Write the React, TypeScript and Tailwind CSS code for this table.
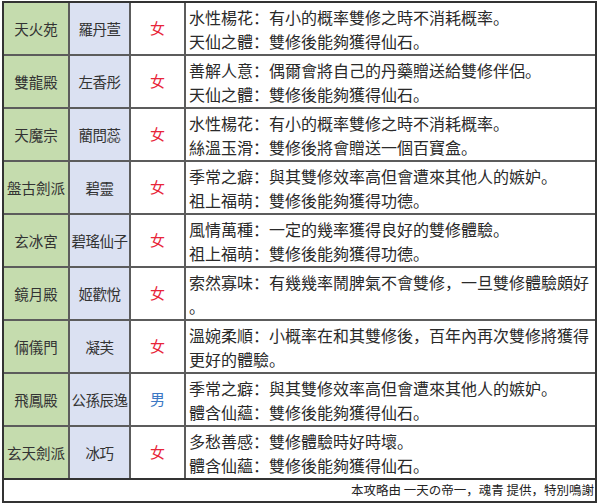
import React from "react";

interface Row {
  sect: string;
  name: string;
  gender: "女" | "男";
  lines: string[];
}

const rows: Row[] = [
  {
    sect: "天火苑",
    name: "羅丹萱",
    gender: "女",
    lines: ["水性楊花：有小的概率雙修之時不消耗概率。", "天仙之體：雙修後能夠獲得仙石。"],
  },
  {
    sect: "雙龍殿",
    name: "左香彤",
    gender: "女",
    lines: ["善解人意：偶爾會將自己的丹藥贈送給雙修伴侶。", "天仙之體：雙修後能夠獲得仙石。"],
  },
  {
    sect: "天魔宗",
    name: "藺問蕊",
    gender: "女",
    lines: ["水性楊花：有小的概率雙修之時不消耗概率。", "絲溫玉滑：雙修後將會贈送一個百寶盒。"],
  },
  {
    sect: "盤古劍派",
    name: "碧靈",
    gender: "女",
    lines: ["季常之癖：與其雙修效率高但會遭來其他人的嫉妒。", "祖上福萌：雙修後能夠獲得功德。"],
  },
  {
    sect: "玄冰宮",
    name: "碧瑤仙子",
    gender: "女",
    lines: ["風情萬種：一定的幾率獲得良好的雙修體驗。", "祖上福萌：雙修後能夠獲得功德。"],
  },
  {
    sect: "鏡月殿",
    name: "姬歡悅",
    gender: "女",
    lines: ["索然寡味：有幾幾率鬧脾氣不會雙修，一旦雙修體驗頗好", "。"],
  },
  {
    sect: "倆儀門",
    name: "凝芙",
    gender: "女",
    lines: ["溫婉柔順：小概率在和其雙修後，百年內再次雙修將獲得", "更好的體驗。"],
  },
  {
    sect: "飛鳳殿",
    name: "公孫辰逸",
    gender: "男",
    lines: ["季常之癖：與其雙修效率高但會遭來其他人的嫉妒。", "體含仙蘊：雙修後能夠獲得仙石。"],
  },
  {
    sect: "玄天劍派",
    name: "冰巧",
    gender: "女",
    lines: ["多愁善感：雙修體驗時好時壞。", "體含仙蘊：雙修後能夠獲得仙石。"],
  },
];

const font = { fontFamily: '"Noto Sans CJK SC", "Noto Sans CJK TC", sans-serif' };

export default function App() {
  return (
    <div className="w-[600px] h-[504px] bg-white pt-[1px] pl-[2px]" style={font}>
      <div className="w-[595px] border-2 border-[#333333]">
        {rows.map((r, i) => (
          <div
            key={r.sect}
            className={`flex h-[53px] ${i < rows.length - 1 ? "border-b-2 border-[#5c5c5c]" : "border-b-2 border-[#333333]"}`}
          >
            <div className="w-[66px] shrink-0 border-r-2 border-[#5c5c5c] bg-[#c5dcae] flex items-center justify-center text-[14.5px] text-[#333] whitespace-nowrap">
              {r.sect}
            </div>
            <div className="w-[61px] shrink-0 border-r-2 border-[#5c5c5c] bg-[#dbe1f2] flex items-center justify-center text-[14.5px] text-[#333] whitespace-nowrap tracking-[-0.5px]">
              {r.name}
            </div>
            <div
              className={`w-[55px] shrink-0 border-r-2 border-[#5c5c5c] flex items-center justify-center text-[15px] ${r.gender === "女" ? "text-[#e8263a]" : "text-[#3b78c4]"}`}
            >
              {r.gender}
            </div>
            <div className="flex-1 flex flex-col justify-center pl-[3px] text-[16px] leading-[24px] text-[#2a2a2a] whitespace-nowrap overflow-hidden">
              {r.lines.map((l) => (
                <div key={l}>{l}</div>
              ))}
            </div>
          </div>
        ))}
        <div className="h-[21px] flex items-center justify-end pr-[1px] text-[12.5px] text-[#222]">
          本攻略由 一天の帝一，魂青 提供，特別鳴謝
        </div>
      </div>
    </div>
  );
}
